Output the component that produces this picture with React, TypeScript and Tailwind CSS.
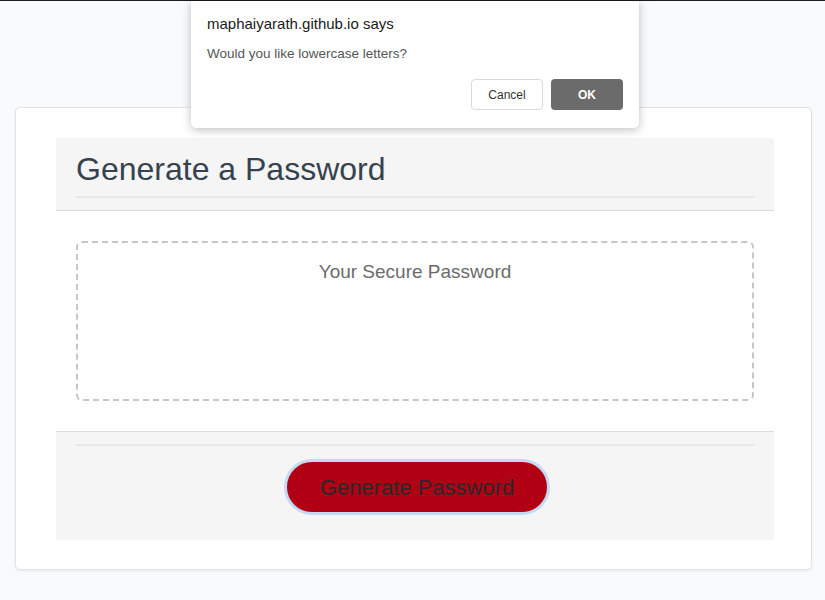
export default function App() {
  return (
    <div className="relative min-h-[600px] border-t border-[#1c1c1c] bg-[#f9fafb] font-['Liberation_Sans',Arial,sans-serif]">
      <div className="ml-[15px] mr-[13px] mt-[106px] rounded-[5px] border border-[#e3e3e3] bg-white pb-[29px] pl-[40px] pr-[37px] pt-[30px] shadow-[0_1px_3px_rgba(0,0,0,0.08)]">
        <div className="rounded-[3px] bg-[#f5f5f5]">
          <div className="border-b border-[#dcdcdc] px-5 pb-[12px] pt-[11px]">
            <h1 className="text-[32px] leading-[40px] text-[#36434f]">Generate a Password</h1>
            <div className="mt-[7px] h-[2px] bg-[#e8e8e8]" />
          </div>
          <div className="bg-white px-5 py-[30px]">
            <div className="h-[160px] rounded-[6px] border-2 border-dashed border-[#c3c6cb] pt-[15px] text-center text-[19px] leading-[28px] text-[#6b6b6b]">
              Your Secure Password
            </div>
          </div>
          <div className="border-t border-[#dcdcdc] px-5 pb-[25px] pt-[12px]">
            <div className="h-[2px] bg-[#e8e8e8]" />
            <div className="mt-[13px] flex justify-center pl-[4px]">
              <button className="h-[56px] w-[266px] rounded-full border-[3px] border-[#c2dbf3] bg-[#b10014] text-[22px] text-[#2a2a2a]">
                Generate Password
              </button>
            </div>
          </div>
        </div>
      </div>

      <div className="absolute left-[191px] top-0 w-[448px] rounded-b-[5px] bg-white px-4 pb-[18px] pt-[12px] shadow-[0_2px_10px_rgba(0,0,0,0.25)]">
        <div className="text-[15px] leading-[22px] text-[#1a1a1a]">maphaiyarath.github.io says</div>
        <div className="mt-[10px] text-[13.5px] leading-[18px] text-[#555]">Would you like lowercase letters?</div>
        <div className="mt-[16px] flex justify-end gap-2">
          <button className="h-[31px] w-[72px] rounded-[4px] border border-[#dadada] bg-white text-[12px] text-[#333]">
            Cancel
          </button>
          <button className="h-[31px] w-[72px] rounded-[4px] bg-[#6b6b6b] text-[12px] font-bold text-white">
            OK
          </button>
        </div>
      </div>
    </div>
  );
}
